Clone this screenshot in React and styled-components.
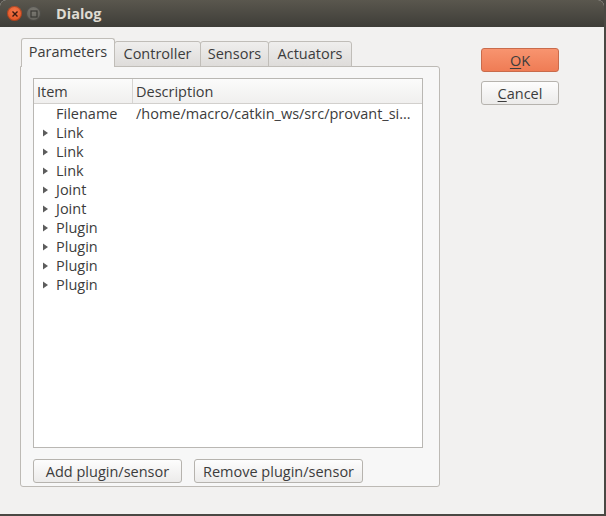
import React from 'react';
import styled, { createGlobalStyle } from 'styled-components';

const GlobalStyle = createGlobalStyle`
  html, body {
    margin: 0;
    padding: 0;
    background: #4a4843;
  }
  body {
    font-family: "Open Sans", "DejaVu Sans", sans-serif;
    font-size: 14.5px;
    color: #3c3c3c;
  }
`;

const Window = styled.div`
  width: 604px;
  height: 514px;
  background: #f2f1f0;
  display: flex;
  flex-direction: column;
  border-radius: 6px 6px 0 0;
  overflow: hidden;
`;

const TitleBar = styled.div`
  height: 27px;
  flex: none;
  background: linear-gradient(#5a574e, #3e3d38);
  display: flex;
  align-items: center;
  padding-left: 7px;
  gap: 4px;
`;

const WinButton = styled.div`
  width: 15px;
  height: 15px;
  border-radius: 50%;
  display: flex;
  align-items: center;
  justify-content: center;
  background: ${(p) => (p.$close ? 'radial-gradient(circle at 50% 35%, #f4774a, #df4b19)' : 'radial-gradient(circle at 50% 35%, #7a7871, #5b5a54)')};
  box-shadow: inset 0 0 0 1px rgba(0, 0, 0, 0.25);
`;

const Title = styled.div`
  margin-left: 11px;
  color: #dfdbd2;
  font-weight: bold;
  font-size: 14.5px;
`;

const Body = styled.div`
  flex: 1;
  display: flex;
  padding: 11px 0 0 20px;
`;

const TabWidget = styled.div`
  width: 420px;
  display: flex;
  flex-direction: column;
`;

const TabBar = styled.div`
  display: flex;
  align-items: flex-end;
  height: 29px;
  padding-left: 1px;
  position: relative;
  z-index: 1;
  margin-bottom: -1px;
`;

const Tab = styled.div`
  width: ${(p) => p.$w}px;
  box-sizing: border-box;
  height: ${(p) => (p.$active ? 29 : 26)}px;
  display: flex;
  align-items: center;
  justify-content: center;
  border: 1px solid #c0bdb8;
  border-bottom: ${(p) => (p.$active ? 'none' : '1px solid #c0bdb8')};
  border-radius: 3px 3px 0 0;
  margin-left: ${(p) => (p.$first ? 0 : -1)}px;
  background: ${(p) => (p.$active ? '#f7f7f7' : 'linear-gradient(#efeeed, #dedcda)')};
  padding-bottom: ${(p) => (p.$active ? 4 : 1)}px;
  color: #3c3c3c;
  white-space: nowrap;
`;

const Panel = styled.div`
  height: 421px;
  box-sizing: border-box;
  background: #f7f7f7;
  border: 1px solid #bdbab5;
  border-radius: 0 3px 3px 3px;
  padding: 11px 16px 0 12px;
  display: flex;
  flex-direction: column;
`;

const Tree = styled.div`
  height: 370px;
  box-sizing: border-box;
  border: 1px solid #b9b7b3;
  background: #ffffff;
  display: flex;
  flex-direction: column;
`;

const HeaderRow = styled.div`
  display: grid;
  grid-template-columns: 99px 1fr;
  height: 24px;
  flex: none;
  background: linear-gradient(#fbfbfb, #f0efee);
  border-bottom: 1px solid #d2d0cd;
`;

const HeaderCell = styled.div`
  display: flex;
  align-items: center;
  padding-left: 3px;
  border-right: ${(p) => (p.$last ? 'none' : '1px solid #d6d4d1')};
  color: #3c3c3c;
`;

const Row = styled.div`
  display: grid;
  grid-template-columns: 100px 1fr;
  height: 19px;
  align-items: center;
`;

const ItemCell = styled.div`
  display: flex;
  align-items: center;
  padding-left: 8px;
  white-space: nowrap;
`;

const Arrow = styled.span`
  width: 14px;
  height: 19px;
  display: flex;
  align-items: center;
  justify-content: flex-start;
  visibility: ${(p) => (p.$hidden ? 'hidden' : 'visible')};
`;

const DescCell = styled.div`
  padding: 0 2px 0 2px;
  white-space: nowrap;
  overflow: hidden;
`;

const ButtonRow = styled.div`
  display: flex;
  gap: 12px;
  margin-top: 11px;
`;

const Button = styled.button`
  font-family: inherit;
  font-size: 14.5px;
  color: #3c3c3c;
  height: 24px;
  width: ${(p) => p.$w}px;
  box-sizing: border-box;
  border: 1px solid #b6b3ae;
  border-radius: 3px;
  background: linear-gradient(#fdfdfd, #ecebea);
  padding: 0;
  display: flex;
  align-items: center;
  justify-content: center;
  white-space: nowrap;
`;

const DefaultButton = styled(Button)`
  background: linear-gradient(#f8946f, #ef7c55);
  border-color: #c96b4b;
`;

const SideButtons = styled.div`
  margin-left: 41px;
  margin-top: 10px;
  display: flex;
  flex-direction: column;
  gap: 9px;
`;

const Mnemonic = styled.span`
  text-decoration: underline;
  text-underline-offset: 2px;
`;

const Triangle = () => (
  <svg width="7" height="8" viewBox="0 0 7 8">
    <path d="M1 0.5 L6 4 L1 7.5 Z" fill="#5c5c5c" />
  </svg>
);

const items = [
  { name: 'Filename', desc: '/home/macro/catkin_ws/src/provant_si…', leaf: true },
  { name: 'Link' },
  { name: 'Link' },
  { name: 'Link' },
  { name: 'Joint' },
  { name: 'Joint' },
  { name: 'Plugin' },
  { name: 'Plugin' },
  { name: 'Plugin' },
  { name: 'Plugin' },
];

const tabs = [
  { label: 'Parameters', w: 94 },
  { label: 'Controller', w: 87 },
  { label: 'Sensors', w: 69 },
  { label: 'Actuators', w: 84 },
];

export default function App() {
  return (
    <>
      <GlobalStyle />
      <Window>
        <TitleBar>
          <WinButton $close>
            <svg width="8" height="8" viewBox="0 0 8 8">
              <path d="M1.5 1.5 L6.5 6.5 M6.5 1.5 L1.5 6.5" stroke="#3a1a10" strokeWidth="1.4" />
            </svg>
          </WinButton>
          <WinButton>
            <svg width="8" height="8" viewBox="0 0 8 8">
              <rect x="1" y="1" width="6" height="6" fill="none" stroke="#3a3935" strokeWidth="1.2" />
            </svg>
          </WinButton>
          <Title>Dialog</Title>
        </TitleBar>
        <Body>
          <TabWidget>
            <TabBar>
              {tabs.map((t, i) => (
                <Tab key={t.label} $w={t.w} $active={i === 0} $first={i === 0}>
                  {t.label}
                </Tab>
              ))}
            </TabBar>
            <Panel>
              <Tree>
                <HeaderRow>
                  <HeaderCell>Item</HeaderCell>
                  <HeaderCell $last>Description</HeaderCell>
                </HeaderRow>
                {items.map((it, i) => (
                  <Row key={i}>
                    <ItemCell>
                      <Arrow $hidden={it.leaf}>
                        <Triangle />
                      </Arrow>
                      {it.name}
                    </ItemCell>
                    <DescCell>{it.desc || ''}</DescCell>
                  </Row>
                ))}
              </Tree>
              <ButtonRow>
                <Button $w={149}>Add plugin/sensor</Button>
                <Button $w={169}>Remove plugin/sensor</Button>
              </ButtonRow>
            </Panel>
          </TabWidget>
          <SideButtons>
            <DefaultButton $w={78}>
              <Mnemonic>O</Mnemonic>K
            </DefaultButton>
            <Button $w={78}>
              <Mnemonic>C</Mnemonic>ancel
            </Button>
          </SideButtons>
        </Body>
      </Window>
    </>
  );
}
